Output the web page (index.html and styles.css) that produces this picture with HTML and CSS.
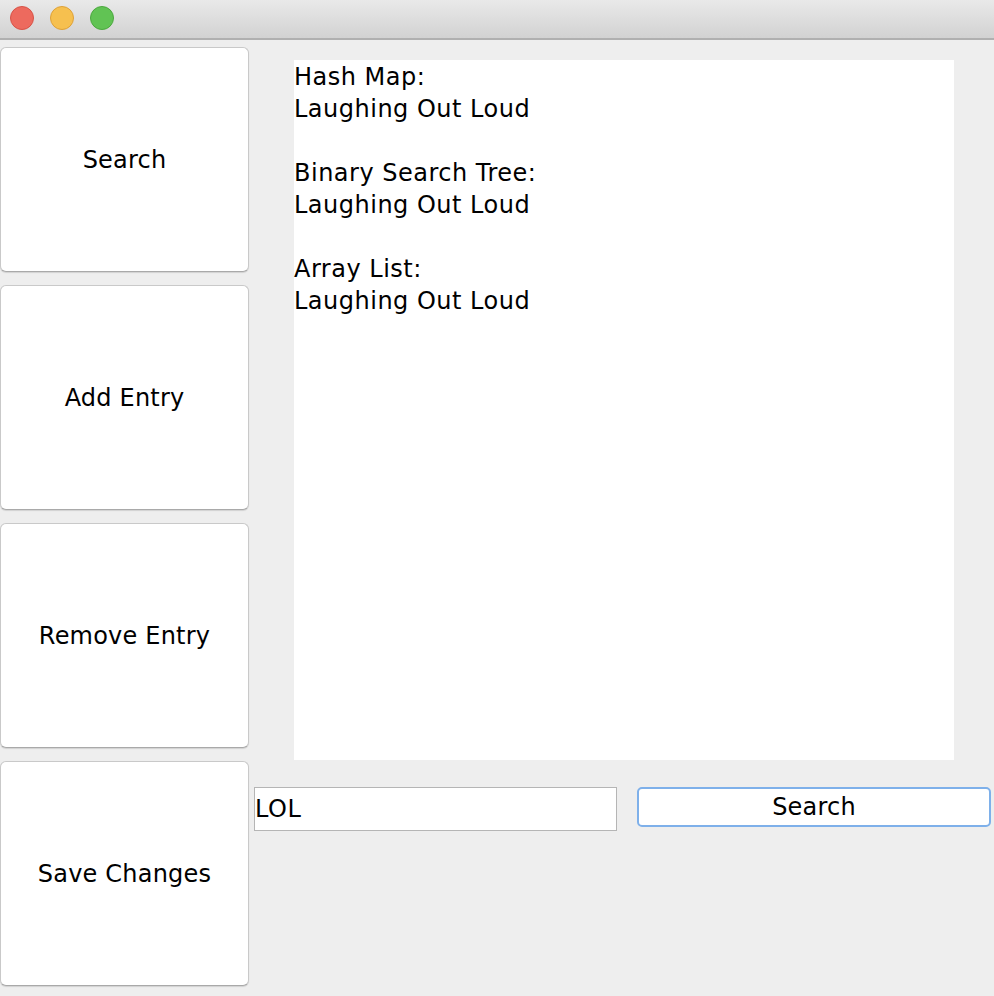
FILE: index.html
```html
<!DOCTYPE html>
<html>
<head>
<meta charset="utf-8">
<link rel="stylesheet" href="styles.css">
</head>
<body>
<div class="window">
  <div class="titlebar">
    <span class="light red"></span>
    <span class="light yellow"></span>
    <span class="light green"></span>
  </div>
  <div class="content">
    <div class="sidebar">
      <button class="big-btn">Search</button>
      <button class="big-btn">Add Entry</button>
      <button class="big-btn">Remove Entry</button>
      <button class="big-btn">Save Changes</button>
    </div>
    <div class="main">
      <div class="output">Hash Map:
Laughing Out Loud

Binary Search Tree:
Laughing Out Loud

Array List:
Laughing Out Loud</div>
      <div class="controls">
        <div class="field">LOL</div>
        <button class="search-btn">Search</button>
      </div>
    </div>
  </div>
</div>
</body>
</html>
```

FILE: styles.css
```css
html, body {
  margin: 0;
  padding: 0;
  background: #eeeeee;
  width: 994px;
  height: 996px;
  overflow: hidden;
}
.window {
  font-family: "DejaVu Sans", sans-serif;
  color: #000;
}
.titlebar {
  height: 38px;
  background: linear-gradient(#e9e9e9, #d2d2d2);
  border-bottom: 2px solid #b0b0b0;
  display: flex;
  align-items: center;
  padding-left: 10px;
  gap: 16px;
  box-sizing: content-box;
}
.light {
  width: 24px;
  height: 24px;
  border-radius: 50%;
  box-sizing: border-box;
  margin-top: -2px;
}
.red { background: #ed6a5e; border: 1px solid #d75347; }
.yellow { background: #f6c04f; border: 1px solid #dea138; }
.green { background: #61c354; border: 1px solid #4ca83f; }
.content {
  display: flex;
}
.sidebar {
  width: 249px;
  padding-top: 7px;
  display: flex;
  flex-direction: column;
  gap: 13px;
}
.big-btn {
  height: 225px;
  width: 249px;
  background: #fff;
  border: 1px solid #c9c9c9;
  border-bottom-color: #a9a9a9;
  border-radius: 6px;
  box-shadow: 0 1px 1px rgba(0,0,0,0.12);
  font-family: "DejaVu Sans", sans-serif;
  font-size: 24px;
  letter-spacing: 0.2px;
  color: #000;
  padding: 0;
}
.main {
  flex: 1;
  display: flex;
  flex-direction: column;
}
.output {
  margin-top: 20px;
  margin-left: 45px;
  width: 660px;
  height: 700px;
  background: #fff;
  white-space: pre;
  font-size: 24px;
  letter-spacing: 0.5px;
  line-height: 32px;
  padding-top: 1px;
  box-sizing: border-box;
}
.controls {
  margin-top: 27px;
  display: flex;
  align-items: flex-start;
  margin-left: 5px;
}
.field {
  width: 363px;
  height: 44px;
  box-sizing: border-box;
  background: #fff;
  border: 1px solid #b5b5b5;
  font-size: 24px;
  letter-spacing: 0.6px;
  line-height: 42px;
  padding-left: 0;
}
.search-btn {
  margin-left: 20px;
  width: 354px;
  height: 40px;
  background: #fff;
  border: 2px solid #7eb0ea;
  border-radius: 5px;
  font-family: "DejaVu Sans", sans-serif;
  font-size: 24px;
  letter-spacing: 0.2px;
  color: #000;
  padding: 0;
}
```
